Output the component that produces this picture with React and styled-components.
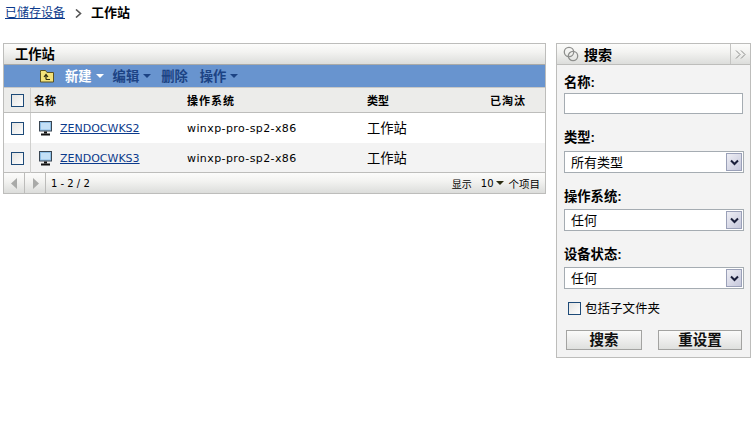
import React from "react"
import styled, { createGlobalStyle, css } from "styled-components"

const GlobalStyle = createGlobalStyle`
  html, body {
    margin: 0;
    padding: 0;
    background: #fff;
    font-family: "Liberation Sans", "Noto Sans CJK SC", sans-serif;
    font-size: 12px;
    color: #000;
  }
  * {
    box-sizing: border-box;
  }
`

const CJK = `"Liberation Sans", "Noto Sans CJK SC", sans-serif`
const LATIN = `"DejaVu Sans", "Noto Sans CJK SC", sans-serif`
const barGradient = css`
  background: linear-gradient(to bottom, #fcfcfb 0%, #f3f3f1 40%, #dcdddb 100%);
`

const Page = styled.div`
  width: 752px;
  height: 421px;
  overflow: hidden;
  padding: 5px 0 0 3px;
`
const Breadcrumb = styled.div`
  display: flex;
  align-items: center;
  height: 16px;
  margin-left: 2px;
  font-size: 12px;
  line-height: 16px;
`
const Crumb = styled.a`
  color: #0b3a8c;
  text-decoration: underline;
`
const CrumbArrow = styled.svg`
  width: 7px;
  height: 9px;
  margin: 0 9px 0 10px;
`
const Current = styled.span`
  font-size: 13px;
  font-weight: bold;
`
const Columns = styled.div`
  display: flex;
  align-items: flex-start;
  margin-top: 22px;
`
const ListPanel = styled.section`
  width: 543px;
  flex: none;
  border: 1px solid #bdbdbb;
`
const TitleBar = styled.div`
  display: flex;
  align-items: center;
  height: 21px;
  padding: 0 0 2px 11px;
  font-size: 13.3px;
  font-weight: bold;
  border-bottom: 1px solid #a9aaa8;
  ${barGradient}
`
const Toolbar = styled.div`
  display: flex;
  align-items: center;
  height: 23px;
  padding: 0 0 1px 35px;
  background: #6894cf;
  border-bottom: 1px solid #c9c9c7;
`
const ToolItem = styled.span`
  display: inline-flex;
  align-items: center;
  gap: 4px;
  margin-right: ${(p) => p.$after || 9}px;
  font-size: 13.3px;
  font-weight: bold;
  color: ${(p) => (p.$light ? "#fff" : "#1c4384")};
`
const Caret = styled.i`
  width: 0;
  height: 0;
  margin-left: ${(p) => p.$gap || 0}px;
  border-left: 4px solid transparent;
  border-right: 4px solid transparent;
  border-top: 4px solid ${(p) => p.$color};
`
const Row = styled.div`
  display: grid;
  grid-template-columns: 27px 156px 180px 123px 1fr;
  align-items: center;
  height: ${(p) => p.$height}px;
  background: ${(p) => p.$bg};
  border-bottom: ${(p) => (p.$line ? "1px solid #bdbdbb" : "none")};
`
const HeadCell = styled.div`
  height: 100%;
  display: flex;
  align-items: center;
  padding-bottom: 1px;
  font-size: 11px;
  font-weight: bold;
  letter-spacing: ${(p) => p.$spread || 0}px;
  padding-left: ${(p) => p.$pad || 0}px;
`
const CheckCell = styled.div`
  height: 100%;
  display: flex;
  align-items: center;
  padding-left: 7px;
  border-right: 1px solid #cfcfcd;
`
const Check = styled.span`
  display: block;
  width: 13px;
  height: 13px;
  border: 1px solid #1d4a78;
  background: linear-gradient(135deg, #e4e4e2, #fdfdfd);
`
const NameCell = styled.div`
  display: flex;
  align-items: center;
  padding-left: 8px;
`
const Link = styled.a`
  margin-left: 6px;
  font-family: ${LATIN};
  font-size: 11px;
  color: #0b3a8c;
  text-decoration: underline;
`
const OsCell = styled.div`
  font-family: ${LATIN};
  font-size: 11px;
  letter-spacing: 0.4px;
`
const TypeCell = styled.div`
  padding-bottom: 2px;
  font-size: 13.3px;
`
const Footer = styled.div`
  display: flex;
  align-items: center;
  height: 21px;
  ${barGradient}
  border-top: 1px solid #bdbdbb;
  margin-top: -1px;
`
const Pager = styled.span`
  display: flex;
  align-items: center;
  justify-content: center;
  width: ${(p) => p.$w}px;
  height: 100%;
  border-right: 1px solid #bcbcba;
`
const Range = styled.span`
  margin-left: 5px;
  font-family: ${LATIN};
  font-size: 10px;
`
const PageSize = styled.div`
  display: flex;
  align-items: center;
  margin-left: auto;
  padding-right: 5px;
  font-size: 10px;
`
const SizeValue = styled.span`
  margin-left: 9px;
  margin-right: 2px;
  font-family: ${LATIN};
  font-size: 10px;
`
const Unit = styled.span`
  margin-left: 5px;
  font-size: 10.5px;
`
const SearchPanel = styled.aside`
  width: 195px;
  height: 315px;
  flex: none;
  margin-left: 10px;
  border: 1px solid #bdbdbb;
  background: #f3f3f3;
`
const SearchTitle = styled.div`
  display: flex;
  align-items: center;
  height: 21px;
  border-bottom: 1px solid #bdbdbb;
  font-size: 14px;
  font-weight: bold;
  ${barGradient}
`
const TitleIcon = styled.svg`
  width: 16px;
  height: 16px;
  margin: 0 5px 0 6px;
`
const Collapse = styled.span`
  display: flex;
  align-items: center;
  justify-content: center;
  width: 20px;
  height: 100%;
  margin-left: auto;
  border-left: 1px solid #c4c4c2;
`
const Form = styled.div`
  display: flex;
  flex-direction: column;
  padding: 9px 5px 0 7px;
`
const Label = styled.label`
  display: block;
  height: 16px;
  line-height: 18px;
  margin-bottom: ${(p) => p.$after}px;
  font-size: 13.3px;
  font-weight: bold;
`
const Field = styled.div`
  height: ${(p) => (p.$narrow ? 21 : 22)}px;
  width: ${(p) => (p.$narrow ? 179 : 180)}px;
  margin-bottom: ${(p) => p.$after}px;
  display: flex;
  align-items: center;
  justify-content: space-between;
  padding: 0 1px 2px 6px;
  font-size: 13px;
  border: 1px solid #a5acb2;
  background: #fff;
`
const ArrowBox = styled.span`
  display: flex;
  align-items: center;
  justify-content: center;
  width: 16px;
  height: 18px;
  margin-bottom: -2px;
  border: 1px solid #9aa0b8;
  background: linear-gradient(135deg, #eeeef4, #c6c8dc);
`
const CheckRow = styled.div`
  display: flex;
  align-items: center;
  gap: 4px;
  margin: 11px 0 0 4px;
  height: 16px;
  font-size: 12.5px;
`
const CheckText = styled.span`
  padding-bottom: 2px;
`
const Buttons = styled.div`
  display: flex;
  gap: 16px;
  margin: 14px 0 0 2px;
`
const Button = styled.button`
  width: ${(p) => p.$w}px;
  height: 20px;
  padding: 0;
  border: 1px solid #a3a3a1;
  font-family: ${CJK};
  font-size: 14.5px;
  font-weight: bold;
  line-height: 16px;
  color: #111;
  background: linear-gradient(to bottom, #fbfbfa, #dfe0de);
`

const Monitor = () => (
  <svg width="15" height="15" viewBox="0 0 15 15">
    <rect x="0.5" y="0.5" width="12" height="9.500" fill="#8fbfe6" stroke="#3a4652" />
    <rect x="2" y="2" width="9" height="6.500" fill="#c4e0f6" />
    <rect x="5" y="10.500" width="3" height="2" fill="#111" />
    <rect x="2" y="12.500" width="9" height="2" fill="#111" />
  </svg>
)

const FolderUp = () => (
  <svg width="16" height="14" viewBox="0 0 16 14" style={{ marginRight: 10 }}>
    <path d="M1.500 3.500V1.500h5l1.500 2h6.500v9.500h-13z" fill="#f3e27a" stroke="#5b5220" />
    <path d="M7 10.500V6M5 8l2-2.500L9 8M7 10.500h4" fill="none" stroke="#2c2a10" strokeWidth="1.200" />
  </svg>
)

const PagerArrow = ({ dir }) => (
  <svg width="7" height="11" viewBox="0 0 7 11">
    <path d={dir === "left" ? "M6 0v11L0 5.500z" : "M1 0v11l6-5.500z"} fill="#a9aaa8" />
  </svg>
)

const SelectArrow = () => (
  <svg width="9" height="7" viewBox="0 0 9 7">
    <path d="M1 1.500l3.500 3.500L8 1.500" fill="none" stroke="#1a1f3a" strokeWidth="2" />
  </svg>
)

const Select = ({ value, after }) => (
  <Field $after={after}>
    {value}
    <ArrowBox><SelectArrow /></ArrowBox>
  </Field>
)

const workstations = ["ZENDOCWKS2", "ZENDOCWKS3"]

export default function App() {
  return (
    <Page>
      <GlobalStyle />
      <Breadcrumb>
        <Crumb>已储存设备</Crumb>
        <CrumbArrow viewBox="0 0 7 9">
          <path d="M1 0.500l4.500 4-4.500 4" fill="none" stroke="#555" strokeWidth="1.600" />
        </CrumbArrow>
        <Current>工作站</Current>
      </Breadcrumb>
      <Columns>
        <ListPanel>
          <TitleBar>工作站</TitleBar>
          <Toolbar>
            <FolderUp />
            <ToolItem $light>新建<Caret $color="#fff" /></ToolItem>
            <ToolItem $after={10}>编辑<Caret $color="#1c4384" /></ToolItem>
            <ToolItem $after={12}>删除</ToolItem>
            <ToolItem>操作<Caret $color="#1c4384" /></ToolItem>
          </Toolbar>
          <Row $height={25} $bg="#ececea" $line>
            <CheckCell><Check /></CheckCell>
            <HeadCell $pad={3}>名称</HeadCell>
            <HeadCell $spread={1}>操作系统</HeadCell>
            <HeadCell>类型</HeadCell>
            <HeadCell $spread={1}>已淘汰</HeadCell>
          </Row>
          {workstations.map((name, i) => (
            <Row key={name} $height={30} $bg={i % 2 ? "#f3f3f3" : "#fff"}>
              <CheckCell><Check /></CheckCell>
              <NameCell>
                <Monitor />
                <Link>{name}</Link>
              </NameCell>
              <OsCell>winxp-pro-sp2-x86</OsCell>
              <TypeCell>工作站</TypeCell>
              <div />
            </Row>
          ))}
          <Footer>
            <Pager $w={21}><PagerArrow dir="left" /></Pager>
            <Pager $w={21}><PagerArrow dir="right" /></Pager>
            <Range>1 - 2 / 2</Range>
            <PageSize>
              显示
              <SizeValue>10</SizeValue>
              <Caret $color="#2b2b10" />
              <Unit>个项目</Unit>
            </PageSize>
          </Footer>
        </ListPanel>
        <SearchPanel>
          <SearchTitle>
            <TitleIcon viewBox="0 0 16 16">
              <circle cx="6" cy="6" r="4.700" fill="none" stroke="#8e8f8d" strokeWidth="1.300" />
              <circle cx="10" cy="10" r="4.700" fill="none" stroke="#8e8f8d" strokeWidth="1.300" />
            </TitleIcon>
            搜索
            <Collapse>
              <svg width="11" height="9" viewBox="0 0 11 9">
                <path d="M1 .5l4 4-4 4M6 .5l4 4-4 4" fill="none" stroke="#8a8b89" />
              </svg>
            </Collapse>
          </SearchTitle>
          <Form>
            <Label $after={3}>名称:</Label>
            <Field $narrow $after={15} />
            <Label $after={6}>类型:</Label>
            <Select value="所有类型" after={15} />
            <Label $after={5}>操作系统:</Label>
            <Select value="任何" after={15} />
            <Label $after={5}>设备状态:</Label>
            <Select value="任何" after={0} />
            <CheckRow>
              <Check />
              <CheckText>包括子文件夹</CheckText>
            </CheckRow>
            <Buttons>
              <Button $w={76}>搜索</Button>
              <Button $w={84}>重设置</Button>
            </Buttons>
          </Form>
        </SearchPanel>
      </Columns>
    </Page>
  )
}
